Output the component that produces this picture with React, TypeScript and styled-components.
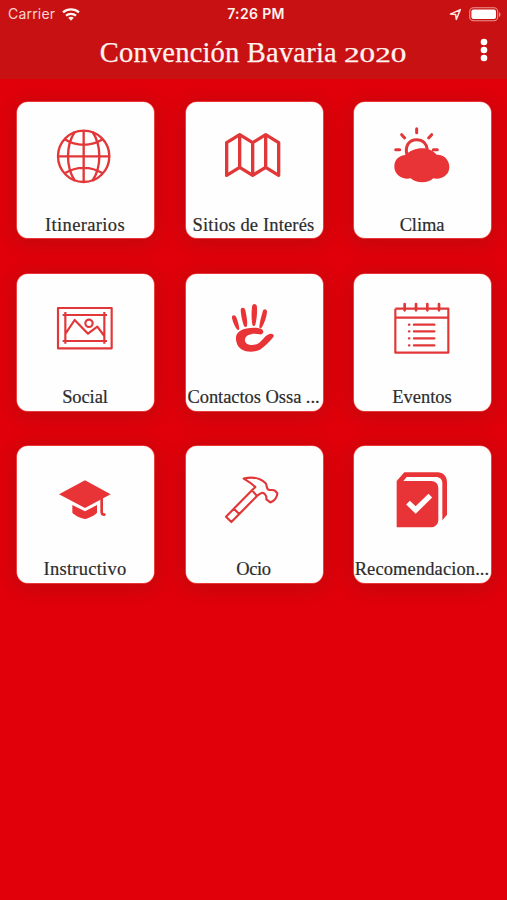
import React from "react";
import styled, { createGlobalStyle } from "styled-components";

const GlobalStyle = createGlobalStyle`
  * { box-sizing: border-box; }
  body { margin: 0; background: #e1000a; overflow: hidden; }
`;

const Screen = styled.main`
  width: 507px;
  height: 900px;
  background: #e1000a;
  overflow: hidden;
`;

const Header = styled.header`
  height: 79px;
  background: #c81112;
  color: #fff3f0;
`;

const StatusBar = styled.div`
  height: 27px;
  display: grid;
  grid-template-columns: 1fr auto 1fr;
  align-items: center;
  padding: 1px 6px 0 8px;
  font: 400 14px/26px Inter, sans-serif;
`;

const StatusGroup = styled.div<{ $end?: boolean }>`
  display: flex;
  align-items: center;
  gap: 7px;
  justify-content: ${(p) => (p.$end ? "flex-end" : "flex-start")};
`;

const Carrier = styled.span`
  letter-spacing: 0.2px;
  color: #fbd5d3;
`;

const Clock = styled.span`
  font-weight: 600;
  font-size: 14px;
  letter-spacing: 0.35px;
  padding-left: 3px;
`;

const TitleBar = styled.div`
  height: 52px;
  display: grid;
  grid-template-columns: 47px 1fr 47px;
  align-items: center;
`;

const Title = styled.h1`
  margin: 0;
  display: flex;
  align-items: baseline;
  justify-content: center;
  white-space: pre;
  font: 400 28.5px/52px "Liberation Serif", serif;
  letter-spacing: 0.2px;
  -webkit-text-stroke: 0.25px currentColor;
`;

const Year = styled.span`
  display: inline-block;
  width: 63px;
  font-size: 20.5px;
  letter-spacing: 0;
  transform: scaleX(1.52);
  transform-origin: left;
`;

const MenuButton = styled.button`
  border: 0;
  padding: 0 0 8px;
  background: none;
  display: flex;
  justify-content: center;
`;

const Grid = styled.section`
  display: grid;
  grid-template-columns: repeat(3, 137px);
  grid-auto-rows: 136.5px;
  column-gap: 31.5px;
  row-gap: 35.8px;
  padding: 22.8px 0 0 17px;
`;

const Card = styled.article`
  display: flex;
  flex-direction: column;
  align-items: center;
  justify-content: space-between;
  padding: 19.5px 0 0.6px;
  border-radius: 11px;
  background: #fffefe;
  box-shadow: 0 0 0 0.6px #ff6a64, 0 3px 18px 5px rgba(150, 20, 20, 0.36);
`;

const Icon = styled.svg`
  width: 66px;
  height: 66px;
  margin-right: 1.4px;
  overflow: visible;
  fill: none;
  stroke: #e23738;
  stroke-linejoin: round;
`;

const Label = styled.span<{ $spacing: number }>`
  font: 400 18.5px/26px "Liberation Serif", serif;
  letter-spacing: ${(p) => p.$spacing}px;
  color: #2c2c2c;
  white-space: nowrap;
  margin-right: 1px;
  -webkit-text-stroke: 0.2px currentColor;
`;

const RED = "#e93437";

const items = [
  {
    name: "Itinerarios",
    spacing: 0.35,
    box: "157 95 198 198",
    art: (
      <g strokeWidth="7">
        <circle cx="252" cy="201" r="77" />
        <path d="M252 124V278M175 201H329M226 127C198 168 198 233 226 275M278 127C306 168 306 233 278 275M195 150C230 172 274 172 309 150M195 252C230 230 274 230 309 252" />
      </g>
    ),
  },
  {
    name: "Sitios de Interés",
    spacing: 0.15,
    box: "153 95 198 198",
    art: (
      <path strokeWidth="10" d="M173 160L212 136L251 160L290 136L329 160V258L290 234L251 258L212 234L173 258ZM212 136V234M251 160V258M290 136V234" />
    ),
  },
  {
    name: "Clima",
    spacing: -0.1,
    box: "158 95 198 198",
    art: (
      <>
        <path strokeWidth="9" d="M212 198C205 171 217 151 241 151C259 151 271 163 273 181" />
        <path strokeWidth="9" strokeLinecap="round" d="M241 118V130M196 136L205 146M286 136L277 146M178 181H190M291 181H303" />
        <path fill={RED} stroke="none" d="M208 197C220 184 238 177 258 177C275 177 291 184 301 196C323 195 339 212 339 233C339 256 318 272 291 267C275 283 239 282 223 267C197 272 174 255 174 232C174 210 189 198 208 197Z" />
      </>
    ),
  },
  {
    name: "Social",
    spacing: -0.1,
    box: "157 102 198 198",
    art: (
      <g strokeWidth="6.5">
        <path d="M175 144H336V265H175Z" />
        <path d="M189 165H322M189 243H322M197 156V251M314 156V251M198 220L225 180L265 221L293 200L314 228" />
        <circle cx="268" cy="190" r="11" />
      </g>
    ),
  },
  {
    name: "Contactos Ossa ...",
    spacing: -0.05,
    box: "153 102 198 198",
    art: (
      <g fill={RED} stroke="none">
        <path d="M189 174C187 164 199 163 202 172C207 187 211 199 211 207C208 213 204 209 201 204C195 194 191 184 189 174ZM215 151C215 141 227 141 229 151C233 169 236 185 234 197C232 203 226 202 224 196C219 181 216 166 215 151ZM249 141C250 129 263 130 264 141C265 160 263 178 259 194C257 199 252 199 250 194C247 177 247 159 249 141ZM281 155C283 144 295 146 294 156C293 172 286 189 279 202C275 208 270 205 271 199C273 183 277 169 281 155Z" />
        <path d="M271 223C284 226 287 211 277 207C261 201 231 203 214 212C201 219 198 232 203 248C210 275 246 281 273 269C286 261 304 243 313 231C317 223 309 219 301 222C289 226 282 239 271 248C256 259 231 257 228 242C226 225 250 218 271 223Z" />
      </g>
    ),
  },
  {
    name: "Eventos",
    spacing: 0,
    box: "158 102 198 198",
    art: (
      <g strokeWidth="6.5">
        <path d="M177 146H336V278H177V146M177 173H336" />
        <path strokeWidth="8" strokeLinecap="round" d="M205 132V151M239 132V151M273 132V151M308 132V151" />
        <path strokeWidth="7" strokeLinecap="round" d="M233 194H294M233 214H294M233 235H294M233 256H294M218 194H219M218 214H219M218 235H219M218 256H219" />
      </g>
    ),
  },
  {
    name: "Instructivo",
    spacing: 0.25,
    box: "157 94 198 198",
    art: (
      <>
        <path fill={RED} stroke="none" d="M178 179L256 137L333 179L256 220ZM218 211L256 230L292 211V234C285 242 269 250 256 253C240 250 224 241 218 234Z" />
        <path strokeWidth="8" strokeLinecap="round" d="M306 192V232C306 237 309 240 314 240" />
      </>
    ),
  },
  {
    name: "Ocio",
    spacing: -0.4,
    box: "153 94 198 198",
    art: (
      <path strokeWidth="6.5" d="M224 132C252 125 276 132 290 146C294 151 292 160 297 164C304 169 310 163 318 168L325 176C325 187 316 200 304 203L292 194C294 183 286 173 278 175C271 177 268 181 264 184L187 262L171 246L249 167L259 157C247 145 236 139 224 132ZM249 167L264 184M194 222L211 238" />
    ),
  },
  {
    name: "Recomendacion...",
    spacing: 0.1,
    box: "158 94 198 198",
    art: (
      <>
        <path fill={RED} stroke="none" d="M181 139L204 113H304C320 113 332 125 332 142V240L318 257V145C318 134 310 127 299 127H211L201 139H284C298 139 306 148 306 161V255C306 269 296 278 282 278H181Z" />
        <path stroke="#ffffff" strokeWidth="16" strokeLinejoin="miter" d="M215 204L238 226L282 183" />
      </>
    ),
  },
];

export default function App() {
  return (
    <Screen>
      <GlobalStyle />
      <Header>
        <StatusBar>
          <StatusGroup>
            <Carrier>Carrier</Carrier>
            <svg width="18" height="13" viewBox="0 0 18 13" fill="none" stroke="#fff3f0" strokeWidth="2.3">
              <path d="M1 4.4C5.5 0.4 12.5 0.4 17 4.4M4 7.7C6.8 5.2 11.2 5.2 14 7.7" />
              <path fill="#fff3f0" stroke="none" d="M6.2 9.8C7.8 8.4 10.2 8.4 11.8 9.8L9 12.7Z" />
            </svg>
          </StatusGroup>
          <Clock>7:26 PM</Clock>
          <StatusGroup $end>
            <svg width="13" height="13" viewBox="0 0 13 13" fill="none" stroke="#ffe4e0" strokeWidth="1.5" strokeLinejoin="round">
              <path d="M1.4 6.1L11.3 1.6L7.3 11.4L6.6 6.4Z" />
            </svg>
            <svg width="32" height="15" viewBox="0 0 32 15">
              <rect x="0.7" y="0.8" width="28" height="13" rx="3.8" fill="none" stroke="#eb9590" strokeWidth="1.1" />
              <rect x="2.4" y="2.5" width="24.6" height="9.6" rx="2" fill="#fff" />
              <path d="M30 5V10Q31.5 9 31.5 7.5T30 5" fill="#eb9590" />
            </svg>
          </StatusGroup>
        </StatusBar>
        <TitleBar>
          <span />
          <Title>
            {"Convención Bavaria "}
            <Year>2020</Year>
          </Title>
          <MenuButton aria-label="Menú">
            <svg width="8" height="24" viewBox="0 0 8 24" fill="#fff">
              <circle cx="4" cy="4" r="3.3" />
              <circle cx="4" cy="12" r="3.3" />
              <circle cx="4" cy="20" r="3.3" />
            </svg>
          </MenuButton>
        </TitleBar>
      </Header>
      <Grid>
        {items.map((item) => (
          <Card key={item.name}>
            <Icon viewBox={item.box}>{item.art}</Icon>
            <Label $spacing={item.spacing}>{item.name}</Label>
          </Card>
        ))}
      </Grid>
    </Screen>
  );
}
